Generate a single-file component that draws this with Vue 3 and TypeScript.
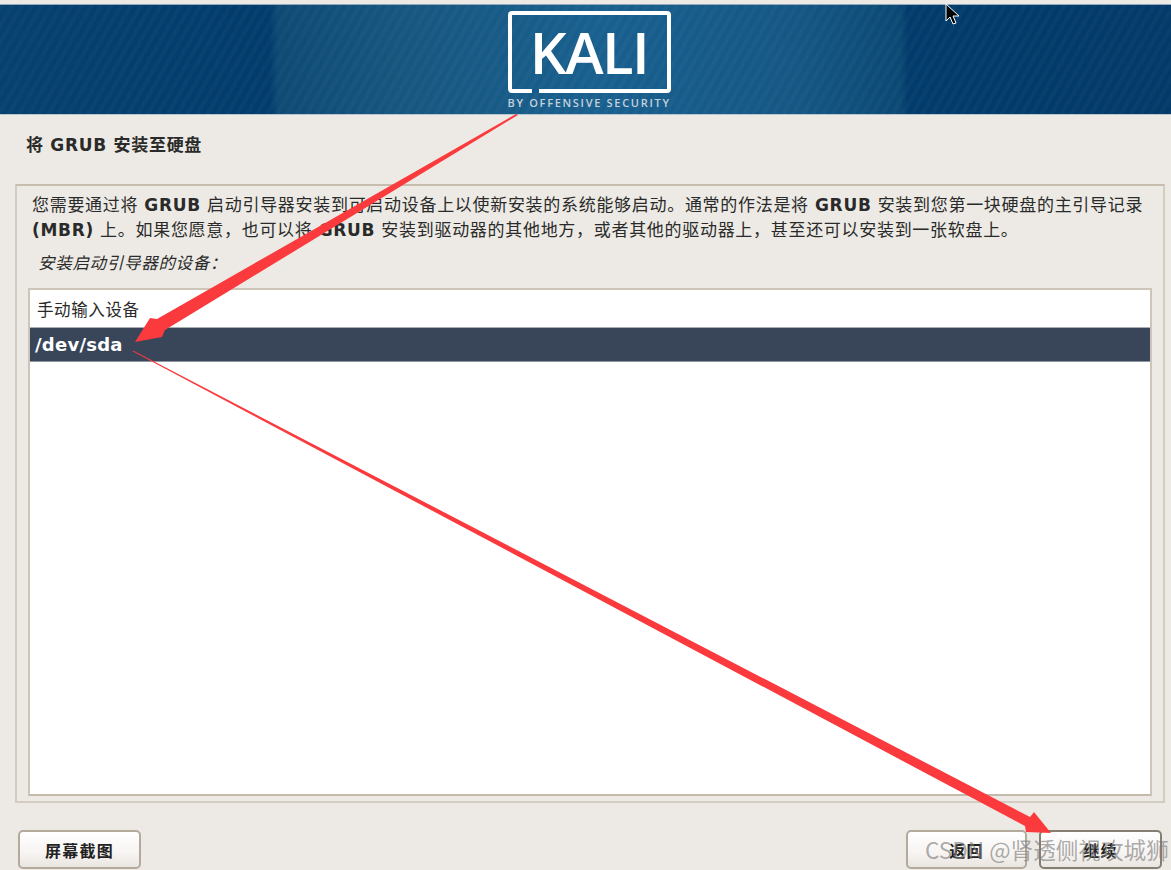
<script setup lang="ts">
const devices: string[] = ['手动输入设备', '/dev/sda']
const selected = '/dev/sda'
</script>

<template>
  <div class="page">
    <header class="banner">
      <div class="logo">
        <div class="logo-box">
          <span class="logo-word">KALI</span>
          <i class="logo-gap"></i>
        </div>
        <div class="logo-sub">BY OFFENSIVE SECURITY</div>
      </div>
    </header>

    <h1 class="title">将 <span>GRUB</span> 安装至硬盘</h1>

    <main class="panel">
      <p class="desc">您需要通过将 <b>GRUB</b> 启动引导器安装到可启动设备上以使新安装的系统能够启动。通常的作法是将 <b>GRUB</b> 安装到您第一块硬盘的主引导记录<br><b>(MBR)</b> 上。如果您愿意，也可以将 <b>GRUB</b> 安装到驱动器的其他地方，或者其他的驱动器上，甚至还可以安装到一张软盘上。</p>
      <p class="label">安装启动引导器的设备：</p>
      <ul class="list">
        <li v-for="d in devices" :key="d" :class="{active: d === selected}">{{ d }}</li>
      </ul>
    </main>

    <footer class="actions">
      <button class="btn">屏幕截图</button>
      <div class="right">
        <button class="btn back">返回</button>
        <button class="btn next">继续</button>
      </div>
    </footer>

    <svg class="overlay" width="1171" height="870" viewBox="0 0 1171 870">
      <polygon points="516,114 518,115 165,330 162,337 135,342 150,318 157,319" fill="#fb3a3e"/>
      <polygon points="132,351 134,351 1030,817 1034,812 1051,833 1026,832 1025,826" fill="#fb3a3e"/>
      <path d="M946 4v17l4-4 3 7 3-1-3-7h6z" fill="#000" stroke="#fff" stroke-width="1"/>
    </svg>

    <div class="watermark">CSDN @肾透侧视攻城狮</div>
  </div>
</template>

<style>
html, body { margin: 0; background: #edeae5; }
</style>

<style scoped>
.page {
  position: relative;
  width: 1171px;
  height: 870px;
  overflow: hidden;
  display: flex;
  flex-direction: column;
  background: #edeae5;
  color: #2a2a2a;
  font-family: "DejaVu Sans", "Noto Sans CJK SC", sans-serif;
  font-size: 17px;
  letter-spacing: .7px;
}
.banner {
  margin-top: 4px;
  height: 111px;
  flex: none;
  display: flex;
  justify-content: center;
  background:
    repeating-linear-gradient(120deg, rgba(255,255,255,.025) 0 4px, transparent 4px 8.6px),
    linear-gradient(90deg, #06416f 0, #023c6d 270px, #0e4a74 278px, #17567f 400px, #19608f 600px, #155684 800px, #0b4974 900px, #023c6c 908px, #033a69 100%);
  border-top: 1px solid #8fa9bf;
  border-bottom: 1px solid #b9c6cf;
  box-sizing: border-box;
}
.logo { margin-left: 7px; padding-top: 6px; width: 163px; letter-spacing: 0; }
.logo-box {
  position: relative;
  height: 82px;
  box-sizing: border-box;
  border: 4px solid #fff;
  border-radius: 4px;
  display: flex;
  align-items: center;
  justify-content: center;
}
.logo-gap {
  position: absolute;
  left: 20px;
  bottom: -4px;
  width: 7px;
  height: 4px;
  background: #17598a;
}
.logo-word {
  color: #fff;
  font: 600 58px "Open Sans", sans-serif;
  letter-spacing: -1.5px;
  line-height: 1;
}
.logo-sub {
  margin-top: 2px;
  color: #c5d1dc;
  font: 600 11px "Open Sans", sans-serif;
  letter-spacing: 1.7px;
  white-space: nowrap;
}
.title {
  margin: 0;
  height: 69px;
  flex: none;
  padding: 20px 0 0 26px;
  box-sizing: border-box;
  font-size: 17px;
  font-weight: 700;
  line-height: 20px;
}
.panel {
  margin: 0 6px 0 15px;
  height: 619px;
  flex: none;
  box-sizing: border-box;
  border: 2px solid #d3ccc0;
  border-top-color: #c6bdae;
  padding: 7px 11px 5px 11px;
  display: flex;
  flex-direction: column;
}
.desc {
  margin: 0 0 0 4px;
  line-height: 25px;
  white-space: nowrap;
}
.label {
  margin: 9px 0 0 10px;
  height: 36px;
  font-size: 16.5px;
  font-style: italic;
  line-height: 24px;
}
.list {
  list-style: none;
  margin: 0;
  flex: 1;
  background: #fff;
  border: 2px solid #cdc5b8;
  border-bottom-color: #c4bbac;
  padding: 0;
  line-height: 42px;
}
.list li { height: 37px; padding-left: 7px; font-size: 16.5px; letter-spacing: .6px; }
.list li.active {
  height: 35px;
  line-height: 33px;
  padding-left: 5px;
  box-sizing: border-box;
  background: #394559;
  color: #fff;
  font-size: 18px;
  font-weight: 700;
  letter-spacing: .25px;
  border-top: 1px solid #a9aeb5;
  border-bottom: 1px solid #8f96a1;
}
.actions {
  flex: 1;
  display: flex;
  justify-content: space-between;
  align-items: flex-start;
  padding: 27px 9px 0 18px;
}
.right { display: flex; gap: 12px; }
.btn {
  width: 123px;
  height: 39px;
  box-sizing: border-box;
  border: 2px solid #b3aa9b;
  border-radius: 5px;
  background: linear-gradient(180deg, #fff 0%, #f7f4f2 60%, #e9e5e0 100%);
  color: #222;
  font: 700 16px "DejaVu Sans", "Noto Sans CJK SC", sans-serif;
  letter-spacing: 1.2px;
  padding: 0;
}
.back { width: 121px; }
.next { border-color: #857e72; }
.overlay { position: absolute; left: 0; top: 0; pointer-events: none; }
.watermark {
  position: absolute;
  left: 925px;
  top: 835px;
  color: rgba(125, 125, 125, .65);
  font: 22.6px "Noto Sans CJK SC", sans-serif;
  letter-spacing: 0;
  line-height: 30px;
  white-space: nowrap;
}
</style>
